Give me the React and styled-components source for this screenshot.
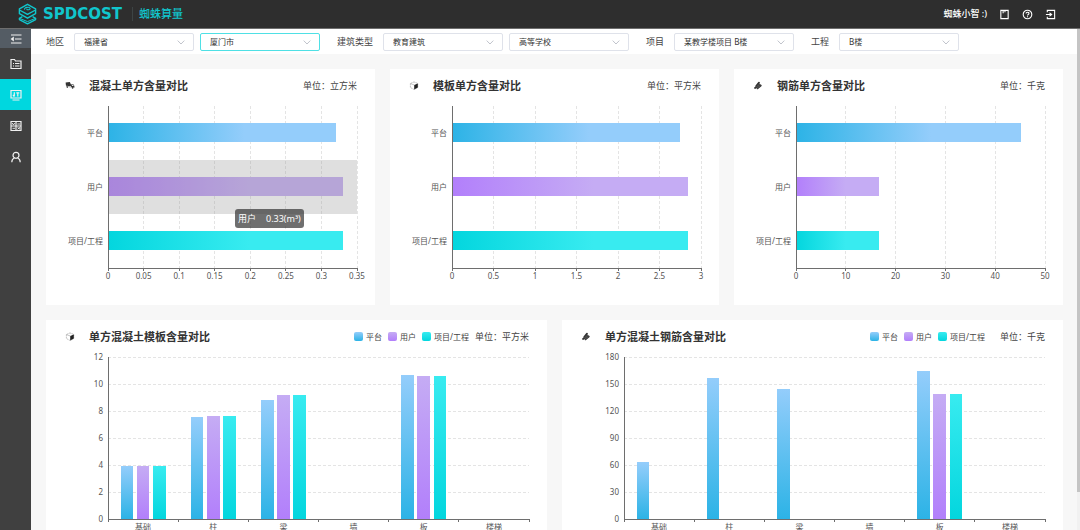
import React, { useEffect, useRef, useState } from 'react';
import styled, { createGlobalStyle } from 'styled-components';

const GlobalStyle = createGlobalStyle`
  * {
    box-sizing: border-box;
  }

  body {
    margin: 0;
    font-family: 'Noto Sans', 'Noto Sans CJK SC', sans-serif;
    color: #333;
    background: #f7f7f7;
  }
`;

const Page = styled.div`
  height: 100vh;
  display: flex;
  flex-direction: column;
`;

const TopBar = styled.header`
  flex: none;
  height: 29px;
  padding: 0 24px 0 18px;
  display: flex;
  align-items: center;
  justify-content: space-between;
  background: #2e2e2e;
  border-bottom: 1px solid #6e6e6e;
`;

const Brand = styled.a`
  display: flex;
  align-items: center;
  color: #10c6cd;
  text-decoration: none;
`;

const BrandName = styled.span`
  min-width: 89px;
  margin-left: 6px;
  font-family: 'DejaVu Sans', sans-serif;
  font-size: 15px;
  font-weight: bold;
  line-height: 20px;
`;

const BrandSub = styled.span`
  padding-left: 6px;
  border-left: 1px solid #3d4444;
  font-size: 11px;
  font-weight: 500;
  line-height: 14px;
`;

const UserTools = styled.div`
  display: flex;
  align-items: center;
  gap: 12px;
  color: #fff;
`;

const UserName = styled.span`
  font-size: 9px;
  font-weight: 500;
  line-height: 14px;
`;

const IconButton = styled.button`
  display: flex;
  padding: 0;
  border: 0;
  background: none;
  color: inherit;
  cursor: pointer;
`;

const Body = styled.div`
  flex: 1;
  min-height: 0;
  display: flex;
`;

const Sidebar = styled.nav`
  flex: none;
  width: 31px;
  display: flex;
  flex-direction: column;
  background: #404040;
`;

const SideButton = styled.button`
  height: 31px;
  padding: 0;
  border: 0;
  display: flex;
  align-items: center;
  justify-content: center;
  color: #f0f0f0;
  background: ${({ $active }) => ($active ? '#00d7df' : 'transparent')};
  cursor: pointer;
`;

const CollapseButton = styled(SideButton)`
  height: 19px;
  background: #545c64;
`;

const Main = styled.main`
  flex: 1;
  min-width: 0;
  overflow-y: auto;
  scrollbar-width: none;
`;

const ScrollTrack = styled.div`
  flex: none;
  width: 3px;
  background: #f1f1f1;
`;

const ScrollThumb = styled.div`
  background: #c4c4c4;
`;

const FilterBar = styled.form`
  height: 25px;
  padding: 0 15px;
  display: flex;
  align-items: center;
  gap: 17px;
  background: #fff;
`;

const FilterGroup = styled.div`
  display: flex;
  align-items: center;
  gap: 6px;
`;

const FilterLabel = styled.label`
  margin-right: 4px;
  color: #444;
  font-size: 9px;
  line-height: 14px;
  white-space: nowrap;
`;

const SelectBox = styled.div`
  position: relative;
  display: flex;
  color: #c0c4cc;

  svg {
    position: absolute;
    right: 9px;
    top: 7px;
    pointer-events: none;
  }
`;

const Select = styled.select`
  appearance: none;
  width: 120px;
  height: 18px;
  padding: 0 20px 0 9px;
  border: 1px solid ${({ $focused }) => ($focused ? '#4fe0e5' : '#dfe2ea')};
  border-radius: 2px;
  background: #fff;
  color: #333;
  font-family: inherit;
  font-size: 8px;
  line-height: 16px;
`;

const Board = styled.div`
  padding: 15px 14px 15px 15px;
  display: grid;
  gap: 15px;
`;

const Row = styled.div`
  display: grid;
  grid-template-columns: repeat(${({ $columns }) => $columns}, minmax(0, 1fr));
  gap: 15px;
`;

const Card = styled.section`
  padding: 0 18px 37px 19px;
  background: #fff;
`;

const CardHead = styled.div`
  height: 33px;
  margin-bottom: 4px;
  display: flex;
  align-items: center;
`;

const CardTitle = styled.h2`
  flex: 1;
  margin: 0 0 0 14px;
  font-size: 11px;
  font-weight: bold;
  line-height: 16px;
`;

const Unit = styled.span`
  min-width: 60px;
  color: #444;
  font-size: 9px;
  line-height: 14px;
  text-align: right;
`;

const Legend = styled.ul`
  margin: 0;
  padding: 0;
  display: flex;
  gap: 6px;
  list-style: none;
`;

const LegendItem = styled.li`
  display: flex;
  align-items: center;
  gap: 3px;
  color: #444;
  font-size: 8px;
  line-height: 12px;

  &::before {
    content: '';
    width: 9px;
    height: 9px;
    border-radius: 2px;
    background: linear-gradient(${({ $light }) => $light}, ${({ $dark }) => $dark});
  }
`;

const Plot = styled.div`
  position: relative;
  margin-left: 43px;
`;

const Canvas = styled.svg`
  display: block;
  width: 100%;
  height: 162px;
  overflow: visible;

  line,
  rect {
    shape-rendering: crispEdges;
  }
`;

const AxisLine = styled.line`
  stroke: #6e6e6e;
`;

const GridLine = styled.line`
  stroke: #e4e4e4;
  stroke-dasharray: 3 2;
`;

const AxisText = styled.text`
  font-size: 8px;
  fill: #555;
  dominant-baseline: central;
`;

const Tooltip = styled.div`
  position: absolute;
  left: 51%;
  top: 103px;
  padding: 3px;
  display: flex;
  gap: 10px;
  border-radius: 3px;
  background: rgba(50, 50, 50, 0.7);
  color: #fff;
  font-size: 9px;
  line-height: 13px;
  white-space: nowrap;
`;

const PLOT_HEIGHT = 162;

const series = [
  { key: 'platform', name: '平台', dark: '#2cb3e6', light: '#94cdfb' },
  { key: 'user', name: '用户', dark: '#b27ffb', light: '#c5acf4' },
  { key: 'project', name: '项目/工程', dark: '#03d6de', light: '#38ebf0' },
];

const filters = [
  { id: 'region', label: '地区', selects: [{ value: '福建省' }, { value: '厦门市', focused: true, aria: '城市' }] },
  { id: 'building', label: '建筑类型', selects: [{ value: '教育建筑' }, { value: '高等学校', aria: '建筑子类型' }] },
  { id: 'project', label: '项目', selects: [{ value: '某教学楼项目 B楼' }] },
  { id: 'works', label: '工程', selects: [{ value: 'B楼' }] },
];

const summaryCharts = [
  {
    title: '混凝土单方含量对比',
    unit: '立方米',
    icon: 'truck',
    ticks: [0, 0.05, 0.1, 0.15, 0.2, 0.25, 0.3, 0.35],
    values: [0.32, 0.33, 0.33],
    hovered: 1,
    tooltip: '0.33(m³)',
  },
  {
    title: '模板单方含量对比',
    unit: '平方米',
    icon: 'cube',
    ticks: [0, 0.5, 1, 1.5, 2, 2.5, 3],
    values: [2.75, 2.84, 2.84],
  },
  {
    title: '钢筋单方含量对比',
    unit: '千克',
    icon: 'steel',
    ticks: [0, 10, 20, 30, 40, 50],
    values: [45.2, 16.6, 16.6],
  },
];

const categories = ['基础', '柱', '梁', '墙', '板', '楼梯'];

const detailCharts = [
  {
    title: '单方混凝土模板含量对比',
    unit: '平方米',
    icon: 'cube',
    ticks: [0, 2, 4, 6, 8, 10, 12],
    values: [
      [3.96, 3.93, 3.93],
      [7.52, 7.6, 7.6],
      [8.79, 9.2, 9.2],
      [0, 0, 0],
      [10.68, 10.56, 10.56],
      [0, 0, 0],
    ],
  },
  {
    title: '单方混凝土钢筋含量对比',
    unit: '千克',
    icon: 'steel',
    ticks: [0, 30, 60, 90, 120, 150, 180],
    values: [
      [63, 0, 0],
      [157, 0, 0],
      [145, 0, 0],
      [0, 0, 0],
      [164.4, 139, 139],
      [0, 0, 0],
    ],
  },
];

const Logo = () => (
  <svg width="19" height="22" viewBox="0 0 19 22" fill="none" stroke="currentColor" strokeWidth="1.4" strokeLinejoin="round" aria-hidden="true">
    <path d="M9.500 1.300 17.600 5.800v4.900L9.500 15.200 1.400 10.700V5.800z" />
    <path d="m1.400 7 8.100 4.300L17.600 7" />
    <path d="M6.500 6.600c-.6-2.400 5.200-3.200 5.600-1.200.3 1.600-3.400 2-3.400.4" strokeWidth="1.100" />
    <path d="m4.400 13.600-3 1.700v1.300l8.100 4.300 8.100-4.300v-1.300l-3-1.700" />
    <path d="m1.400 15.300 8.100 3.300 8.100-3.300" strokeWidth="1" />
  </svg>
);

const Chevron = () => (
  <svg width="8" height="5" viewBox="0 0 8 5" fill="none" stroke="currentColor" aria-hidden="true">
    <path d="M.7.6 4 4 7.3.6" />
  </svg>
);

const CardIcon = ({ name }) => (
  <svg width="10" height="10" viewBox="0 0 10 10" aria-hidden="true">
    {name === 'truck' && (
      <g fill="#333">
        <path d="M.6 1.600 4.800.9l1.300 2.900-.2 1.400L1 4.800z" />
        <path d="M6.200 3.200 8.600 3.600l.8 1.500v1.300l-3.400-.5z" />
        <path d="M1 5.200 9.400 6.200v.6L1 5.800z" fill="#777" />
        <circle cx="2.300" cy="6.100" r=".8" />
        <circle cx="7.600" cy="6.900" r=".8" />
        <path d="m7 4 1.300.2.500.9-1.800-.2z" fill="#fff" />
      </g>
    )}
    {name === 'cube' && (
      <g>
        <path d="M5 .9 8.800 2.500v4L5.200 8.600 1.400 6.500v-4z" fill="#fff" stroke="#999" strokeWidth=".6" strokeDasharray="1.6 .5" />
        <path d="m5.200 4 3.600-1.500v4L5.200 8.400z" fill="#222" />
        <path d="M1.400 2.500 5.200 4" stroke="#999" strokeWidth=".6" />
      </g>
    )}
    {name === 'steel' && (
      <g fill="none" stroke="#333" strokeLinecap="round" strokeWidth="1.800">
        <path d="M3.200 5 6 1.700M2 7l4.500-3.400M4.500 7.300 7.800 4.500" />
        <path d="m3.600 5.800 3-2.600M4.200 7 7 4.800" stroke="#999" strokeWidth=".4" />
      </g>
    )}
  </svg>
);

const LineIcon = ({ size = 12, children }) => (
  <svg width={size} height={size} viewBox="0 0 12 12" fill="none" stroke="currentColor" strokeWidth="1.2" aria-hidden="true">
    {children}
  </svg>
);

const Gradients = ({ id, vertical }) => (
  <defs>
    {series.map(({ key, dark, light }) => (
      <linearGradient key={key} id={`${id}-${key}`} x1="0" y1={vertical ? 1 : 0} x2={vertical ? 0 : 1} y2="0">
        <stop offset="0" stopColor={dark} />
        <stop offset={vertical ? 1 : 0.6} stopColor={light} />
      </linearGradient>
    ))}
  </defs>
);

const BarChart = ({ id, ticks, values, hovered, tooltip }) => {
  const max = ticks[ticks.length - 1];
  const band = PLOT_HEIGHT / series.length;

  return (
    <Plot>
      <Canvas role="img">
        <Gradients id={id} />
        {ticks.slice(1).map((tick) => (
          <GridLine key={tick} x1={`${(tick / max) * 100}%`} x2={`${(tick / max) * 100}%`} y1="0" y2={PLOT_HEIGHT} />
        ))}
        {series.map(({ key, name }, i) => (
          <React.Fragment key={key}>
            <rect y={band * i + 17} width={`${(values[i] / max) * 100}%`} height="19" fill={`url(#${id}-${key})`} />
            <AxisText x="-5" y={band * i + 26} textAnchor="end">{name}</AxisText>
          </React.Fragment>
        ))}
        {hovered !== undefined && (
          <rect y={band * hovered} width="100%" height={band} fill="rgba(150, 150, 150, 0.3)" />
        )}
        <AxisLine x1="0" x2="0" y1="0" y2={PLOT_HEIGHT} />
        <AxisLine x1="0" x2="100%" y1={PLOT_HEIGHT} y2={PLOT_HEIGHT} />
        {ticks.map((tick) => (
          <React.Fragment key={tick}>
            <AxisLine x1={`${(tick / max) * 100}%`} x2={`${(tick / max) * 100}%`} y1={PLOT_HEIGHT} y2={PLOT_HEIGHT + 3} />
            <AxisText x={`${(tick / max) * 100}%`} y={PLOT_HEIGHT + 7} textAnchor="middle">{tick}</AxisText>
          </React.Fragment>
        ))}
      </Canvas>
      {tooltip && (
        <Tooltip role="tooltip">
          <span>{series[hovered].name}</span>
          <span>{tooltip}</span>
        </Tooltip>
      )}
    </Plot>
  );
};

const ColumnChart = ({ id, ticks, values }) => {
  const max = ticks[ticks.length - 1];
  const band = 100 / categories.length;
  const toY = (value) => PLOT_HEIGHT - (value / max) * PLOT_HEIGHT;

  return (
    <Plot>
      <Canvas role="img">
        <Gradients id={id} vertical />
        {ticks.map((tick) => (
          <React.Fragment key={tick}>
            {tick > 0 && <GridLine x1="0" x2="100%" y1={toY(tick)} y2={toY(tick)} />}
            <AxisText x="-5" y={toY(tick) - 1} textAnchor="end">{tick}</AxisText>
          </React.Fragment>
        ))}
        {values.map((group, i) =>
          group.map((value, j) => (
            value > 0 && (
              <rect
                key={`${i}-${j}`}
                x={`${band * (i + 0.18 + j * 0.23)}%`}
                y={toY(value)}
                width={`${band * 0.18}%`}
                height={PLOT_HEIGHT - toY(value)}
                fill={`url(#${id}-${series[j].key})`}
              />
            )
          ))
        )}
        <AxisLine x1="0" x2="0" y1="0" y2={PLOT_HEIGHT} />
        <AxisLine x1="0" x2="100%" y1={PLOT_HEIGHT} y2={PLOT_HEIGHT} />
        {[...categories, ''].map((name, i) => (
          <AxisLine key={name} x1={`${band * i}%`} x2={`${band * i}%`} y1={PLOT_HEIGHT} y2={PLOT_HEIGHT + 3} />
        ))}
        {categories.map((name, i) => (
          <AxisText key={name} x={`${band * (i + 0.5)}%`} y={PLOT_HEIGHT + 7} textAnchor="middle">{name}</AxisText>
        ))}
      </Canvas>
    </Plot>
  );
};

const App = () => {
  const mainRef = useRef(null);
  const [scroll, setScroll] = useState({ size: 0, offset: 0 });

  const updateScroll = () => {
    const { clientHeight, scrollHeight, scrollTop } = mainRef.current;
    const overflows = scrollHeight > clientHeight;
    setScroll({
      size: overflows ? (clientHeight * clientHeight) / scrollHeight : 0,
      offset: (scrollTop * clientHeight) / scrollHeight,
    });
  };

  useEffect(() => {
    updateScroll();
    window.addEventListener('resize', updateScroll);
    return () => window.removeEventListener('resize', updateScroll);
  }, []);

  return (
    <>
      <GlobalStyle />
      <Page>
        <TopBar>
          <Brand href="#">
            <Logo />
            <BrandName>SPDCOST</BrandName>
            <BrandSub>蜘蛛算量</BrandSub>
          </Brand>
          <UserTools>
            <UserName>蜘蛛小智 :)</UserName>
            <IconButton type="button" aria-label="手册">
              <LineIcon size={11}>
                <path d="M2 1.5h8v9H2zM4.5 1.5v3M6.5 1.5v2" />
              </LineIcon>
            </IconButton>
            <IconButton type="button" aria-label="帮助">
              <LineIcon size={11}>
                <circle cx="6" cy="6" r="4.7" />
                <path d="M4.4 5c0-2 3.2-2 3.2-.2C7.6 6 6 5.9 6 7.2M6 8v1" />
              </LineIcon>
            </IconButton>
            <IconButton type="button" aria-label="退出">
              <LineIcon size={11}>
                <path d="M2.5 3.5v-2h8v9h-8v-2M1 6h5" />
                <path d="m5 3.6 3.2 2.4L5 8.4z" fill="currentColor" stroke="none" />
              </LineIcon>
            </IconButton>
          </UserTools>
        </TopBar>

        <Body>
          <Sidebar>
            <CollapseButton type="button" aria-label="收起菜单">
              <LineIcon>
                <path d="M1 2h10.500M5 6h6.500M1 10h10.500" />
                <path d="M3.800 3.600v4.800L.6 6z" fill="currentColor" stroke="none" />
              </LineIcon>
            </CollapseButton>
            <SideButton type="button" aria-label="项目">
              <LineIcon>
                <path d="M1 10.500v-9h3.500l1 1.500H11v7.500z" />
                <path d="M3 5.500h1M5 5.500h4.500M3 8h1M5 8h4.500" />
              </LineIcon>
            </SideButton>
            <SideButton type="button" $active aria-label="指标对比">
              <LineIcon>
                <path d="M1 1.500h10v7.500H1zM2.500 11h7M4.300 3.300v4.200M3 6l1.300 1.500M7.800 7.500V3.800M6.300 3.800h3" />
              </LineIcon>
            </SideButton>
            <SideButton type="button" aria-label="数据">
              <LineIcon>
                <path d="M1 1.500h10v9H1zM6 1.500v9M1 6h10" />
                <path d="M2.200 3l1.300 2 1.200-2M7.300 4H10M2.500 8.300H5M7.500 7.300l2.500 2M10 7.300l-2.500 2" strokeWidth=".9" />
              </LineIcon>
            </SideButton>
            <SideButton type="button" aria-label="用户">
              <LineIcon>
                <circle cx="6" cy="4.300" r="3" />
                <path d="M1.800 11.200c0-2.200 1.200-3.700 2.700-4.200M10.200 11.200c0-2.200-1.200-3.700-2.700-4.200" />
              </LineIcon>
            </SideButton>
          </Sidebar>

          <Main ref={mainRef} onScroll={updateScroll}>
            <FilterBar>
              {filters.map(({ id, label, selects }) => (
                <FilterGroup key={id}>
                  <FilterLabel htmlFor={`${id}-0`}>{label}</FilterLabel>
                  {selects.map(({ value, focused, aria }, i) => (
                    <SelectBox key={value}>
                      <Select id={`${id}-${i}`} $focused={focused} aria-label={aria} defaultValue={value}>
                        <option>{value}</option>
                      </Select>
                      <Chevron />
                    </SelectBox>
                  ))}
                </FilterGroup>
              ))}
            </FilterBar>

            <Board>
              <Row $columns={3}>
                {summaryCharts.map(({ title, unit, icon, ...chart }, i) => (
                  <Card key={title}>
                    <CardHead>
                      <CardIcon name={icon} />
                      <CardTitle>{title}</CardTitle>
                      <Unit>单位：{unit}</Unit>
                    </CardHead>
                    <BarChart id={`summary-${i}`} {...chart} />
                  </Card>
                ))}
              </Row>
              <Row $columns={2}>
                {detailCharts.map(({ title, unit, icon, ...chart }, i) => (
                  <Card key={title}>
                    <CardHead>
                      <CardIcon name={icon} />
                      <CardTitle>{title}</CardTitle>
                      <Legend>
                        {series.map(({ key, name, dark, light }) => (
                          <LegendItem key={key} $dark={dark} $light={light}>{name}</LegendItem>
                        ))}
                      </Legend>
                      <Unit>单位：{unit}</Unit>
                    </CardHead>
                    <ColumnChart id={`detail-${i}`} {...chart} />
                  </Card>
                ))}
              </Row>
            </Board>
          </Main>
          <ScrollTrack>
            <ScrollThumb style={{ height: scroll.size, marginTop: scroll.offset }} />
          </ScrollTrack>
        </Body>
      </Page>
    </>
  );
};

export default App;
